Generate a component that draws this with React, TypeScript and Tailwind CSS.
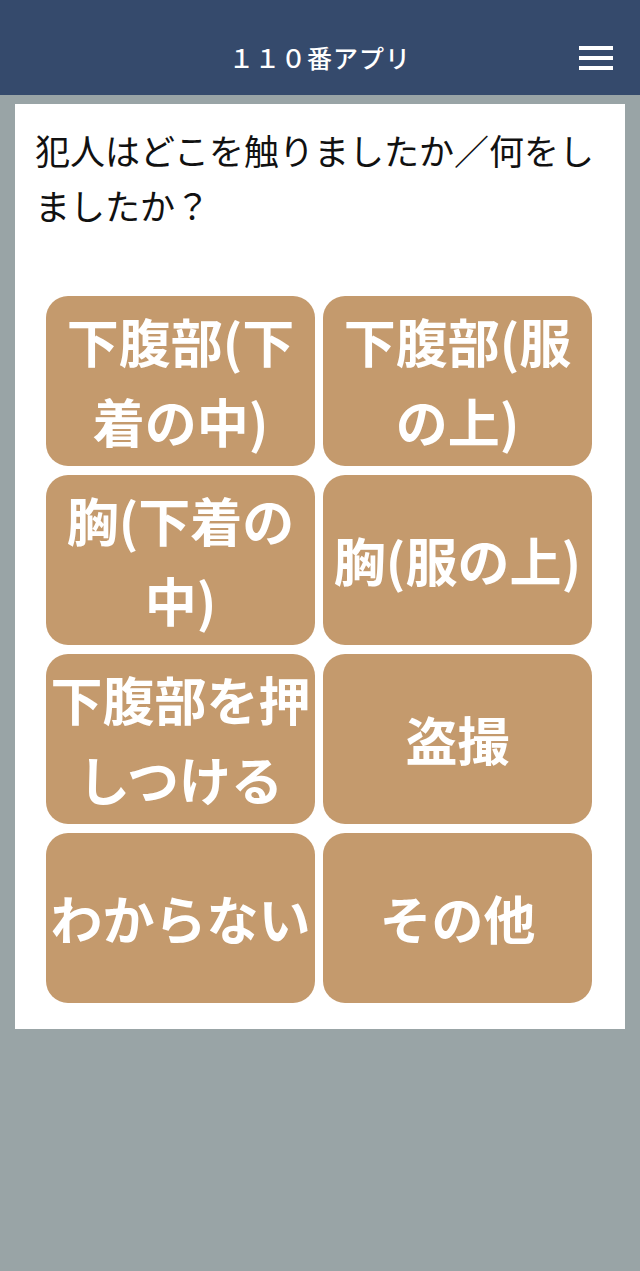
const OPTIONS = [
  '下腹部(下着の中)',
  '下腹部(服の上)',
  '胸(下着の中)',
  '胸(服の上)',
  '下腹部を押しつける',
  '盗撮',
  'わからない',
  'その他',
];

const jp = { fontFamily: '"Noto Sans CJK JP", "Noto Sans", sans-serif' };

function Header() {
  return (
    <header className="h-[95px] bg-[#354a6c] flex flex-col">
      <div className="h-[20px]" />
      <div className="relative flex-1 flex items-center justify-center">
        <h1 className="text-[25px] leading-none font-medium tracking-[1px] text-white">１１０番アプリ</h1>
        <button className="absolute right-[27px] top-1/2 -translate-y-1/2 flex flex-col gap-[6px]" aria-label="menu">
          <span className="block w-[34px] h-[4px] bg-white" />
          <span className="block w-[34px] h-[4px] bg-white" />
          <span className="block w-[34px] h-[4px] bg-white" />
        </button>
      </div>
    </header>
  );
}

export default function App() {
  return (
    <div className="min-h-[1271px] bg-[#99a4a6]" style={jp}>
      <Header />
      <main className="mx-[15px] mt-[9px] bg-white pt-[18px] pb-[26px]">
        <p className="px-[20px] text-[35px] leading-[55px] text-[#111]">
          犯人はどこを触りましたか／何をしましたか？
        </p>
        <div className="mt-[64px] ml-[31px] w-[546px] grid grid-cols-2 gap-x-[8px] gap-y-[9px]">
          {OPTIONS.map((label) => (
            <button
              key={label}
              className="h-[170px] rounded-[22px] bg-[#c49a6d] px-[3px] flex items-center justify-center text-white text-[52px] leading-[80px] font-bold"
            >
              <span>{label}</span>
            </button>
          ))}
        </div>
      </main>
    </div>
  );
}
